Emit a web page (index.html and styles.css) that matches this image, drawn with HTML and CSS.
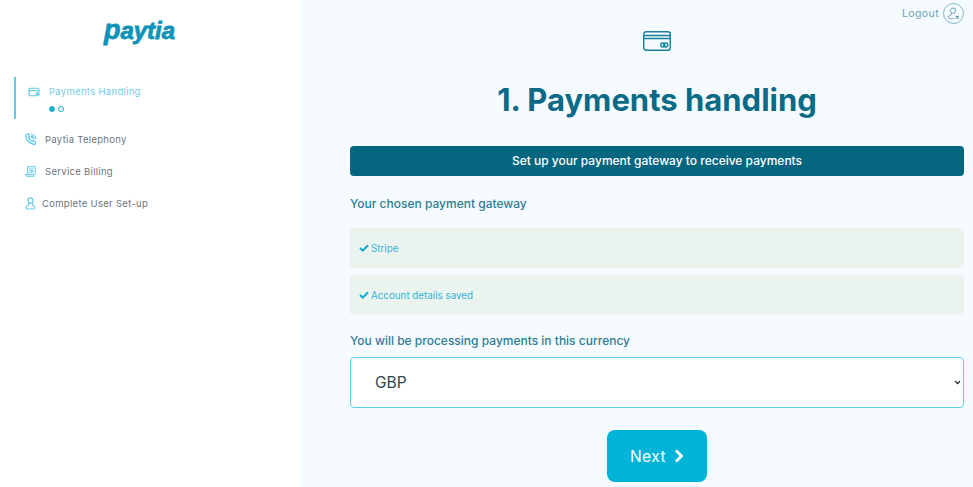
FILE: index.html
```html
<!DOCTYPE html>
<html lang="en">
<head>
    <meta charset="UTF-8">
    <title>Paytia - Payments handling</title>
    <link rel="stylesheet" href="styles.css">
</head>
<body>
    <div class="layout">
        <aside class="sidebar">
            <div class="logo"><span class="logo-p">p</span>aytia</div>
            <ul class="steps">
                <li class="step active">
                    <div class="step-row">
                        <svg class="step-icon" viewBox="0 0 14 12" width="12" height="10" fill="none" stroke="#5fcbe6" stroke-width="1.4"><rect x="1" y="1.5" width="12" height="9" rx="1.5"/><path d="M1 4.500h12"/><circle cx="10.500" cy="8" r="1"/></svg>
                        <span>Payments Handling</span>
                    </div>
                    <div class="dots"><i class="dot on"></i><i class="dot"></i></div>
                </li>
                <li class="step">
                    <div class="step-row">
                        <svg class="step-icon" viewBox="0 0 14 15" width="12" height="13" fill="none" stroke="#5fcbe6" stroke-width="1.500"><path d="M2 1.500 4.200 1l1.300 3-1.300 1.200c.6 2 2 3.700 4 4.600l1.300-1.200 2.800 1.500-.6 2.300c-.3.8-1 1-1.800.9C5 12 1.500 8 1 3.300c0-.8.3-1.500 1-1.800z"/><path d="M7 1.500c3 0 5.500 2.300 5.700 5.500M7 4c1.700 0 3 1.300 3.200 3"/></svg>
                        <span>Paytia Telephony</span>
                    </div>
                </li>
                <li class="step">
                    <div class="step-row">
                        <svg class="step-icon" viewBox="0 0 14 13" width="12" height="11" fill="none" stroke="#5fcbe6" stroke-width="1.200"><path d="M3 10V1h9v9"/><path d="M1 10h9.500v2H2c-.6 0-1-.5-1-1z"/><path d="M5 3.500h5M5 5.500h5M5 7.500h5"/></svg>
                        <span>Service Billing</span>
                    </div>
                </li>
                <li class="step user-step">
                    <div class="step-row">
                        <svg class="step-icon" viewBox="0 0 11 13" width="11" height="13" fill="none" stroke="#5fcbe6" stroke-width="1.100"><circle cx="5.500" cy="3.500" r="2.600"/><path d="M3.800 6.200 3.500 8C1.800 8.500 1 9.300 1 10.500 1 11.500 1.500 12 2.500 12h6c1 0 1.500-.5 1.500-1.500 0-1.200-.8-2-2.500-2.500l-.3-1.800"/></svg>
                        <span>Complete User Set-up</span>
                    </div>
                </li>
            </ul>
        </aside>
        <main class="content">
            <div class="topbar">
                <span>Logout</span>
                <div class="logout-btn">
                    <svg viewBox="0 0 14 14" width="13" height="13" fill="none" stroke="#7fb4c6" stroke-width="1.100"><circle cx="6.500" cy="4" r="2.800"/><path d="M5 6.500 4.800 8C2.800 8.500 1.500 9.300 1.500 10.800c0 1 .5 1.500 1.500 1.500h5"/><path d="M9.500 9.500l3 3M12.500 9.500l-3 3" stroke="#3d8aa3"/></svg>
                </div>
            </div>
            <div class="hero-icon">
                <svg viewBox="0 0 28 20" width="28" height="20" fill="none" stroke="#167f9c" stroke-width="1.400"><rect x="0.700" y="0.700" width="26.600" height="18.600" rx="2.500"/><path d="M1 4.500h26M1 7.500h26"/><circle cx="19.800" cy="14" r="2"/><circle cx="22.800" cy="14" r="2"/></svg>
            </div>
            <h1>1. Payments handling</h1>
            <div class="banner">Set up your payment gateway to receive payments</div>
            <h2 class="gateway-title">Your chosen payment gateway</h2>
            <div class="notice">
                <svg class="tick" viewBox="0 0 10 8" width="10" height="8" fill="none" stroke="#14a9d0" stroke-width="2"><path d="M1 4l2.800 2.600L9 1.200"/></svg>
                Stripe
            </div>
            <div class="notice">
                <svg class="tick" viewBox="0 0 10 8" width="10" height="8" fill="none" stroke="#14a9d0" stroke-width="2"><path d="M1 4l2.800 2.600L9 1.200"/></svg>
                Account details saved
            </div>
            <h2 class="currency-title">You will be processing payments in this currency</h2>
            <select class="currency">
                <option>GBP</option>
            </select>
            <div class="actions">
                <button type="button" class="next">Next
                    <svg viewBox="0 0 10 14" width="10" height="14" fill="none" stroke="#fff" stroke-width="2.800"><path d="M2 1.500 7.500 7 2 12.500"/></svg>
                </button>
            </div>
        </main>
    </div>
</body>
</html>
```

FILE: styles.css
```css
body {
    margin: 0;
    font-family: Inter, sans-serif;
    background: #fff;
    overflow: hidden;
}
.layout {
    display: flex;
    height: 487px;
}
.sidebar {
    width: 300px;
    flex-shrink: 0;
    background: #fff;
}
.logo {
    margin-top: 15px;
    text-align: center;
    padding-right: 21px;
    font-family: "Liberation Sans", sans-serif;
    font-size: 24px;
    line-height: 32px;
    font-weight: 700;
    font-style: italic;
    color: #0e93b8;
    -webkit-text-stroke: 0.8px #0e93b8;
}
.logo-p {
    font-size: 27px;
    line-height: 30px;
}
.steps {
    list-style: none;
    margin: 30px 0 0 14px;
    padding: 0;
}
.step {
    height: 32px;
    padding-left: 11px;
    font-size: 9.5px;
    letter-spacing: 0.3px;
    color: #6b7480;
}
.step-row {
    display: flex;
    align-items: center;
    gap: 8px;
    height: 24px;
}
.step.active {
    height: 42px;
    margin-bottom: 8px;
    padding-left: 12px;
    border-left: 2px solid #5fcbe6;
    color: #6fcde6;
}
.step.active .step-row {
    height: 29px;
    gap: 9px;
}
.user-step .step-row {
    gap: 6px;
}
.dots {
    display: flex;
    gap: 3px;
    margin-left: 21px;
}
.dot {
    width: 4px;
    height: 4px;
    border: 1px solid #19b0d6;
    border-radius: 50%;
}
.dot.on {
    background: #19b0d6;
}
.content {
    flex: 1;
    background: #f5fbfe;
    padding: 0 9px 0 50px;
    min-width: 0;
}
.topbar {
    display: flex;
    justify-content: flex-end;
    align-items: center;
    gap: 4px;
    height: 26px;
    font-size: 10.5px;
    letter-spacing: 0.4px;
    color: #6f9fb2;
}
.logout-btn {
    display: flex;
    align-items: center;
    justify-content: center;
    width: 19px;
    height: 19px;
    border: 1px solid #7fb4c6;
    border-radius: 50%;
}
.hero-icon {
    display: flex;
    justify-content: center;
    margin-top: 5px;
}
h1 {
    margin: 27px 0 0;
    text-align: center;
    font-size: 31px;
    line-height: 44px;
    font-weight: 700;
    color: #0b6a85;
}
.banner {
    margin-top: 24px;
    height: 30px;
    line-height: 30px;
    text-align: center;
    font-size: 12px;
    font-weight: 500;
    color: #fff;
    background: #04667f;
    border-radius: 4px;
}
h2 {
    font-size: 12px;
    font-weight: 500;
    line-height: 18px;
    color: #2f7d94;
}
.gateway-title {
    margin: 19px 0 15px;
}
.notice {
    display: flex;
    align-items: center;
    gap: 2px;
    height: 40px;
    margin-bottom: 7px;
    padding-left: 9px;
    font-size: 9.8px;
    color: #35b5d8;
    background: #eaf3ee;
    border-radius: 4px;
}
.currency-title {
    margin: 17px 0 7px;
}
.currency {
    display: block;
    width: 100%;
    height: 51px;
    padding-left: 24px;
    font-family: Inter, sans-serif;
    font-size: 15.5px;
    color: #33424c;
    background: #fff url("data:image/svg+xml,%3Csvg xmlns='http://www.w3.org/2000/svg' width='7' height='5'%3E%3Cpath d='M1 1l2.500 2.500L6 1' fill='none' stroke='%23333' stroke-width='1.300'/%3E%3C/svg%3E") no-repeat right 2px center;
    border: 1px solid #5fd0ea;
    border-radius: 4px;
    appearance: none;
}
.actions {
    display: flex;
    justify-content: center;
    margin-top: 22px;
}
.next {
    display: flex;
    align-items: center;
    justify-content: center;
    gap: 8px;
    width: 100px;
    height: 52px;
    padding: 0;
    font-family: Inter, sans-serif;
    font-size: 15.5px;
    letter-spacing: 0.5px;
    color: #fff;
    background: #00b4d8;
    border: none;
    border-radius: 8px;
}
```
